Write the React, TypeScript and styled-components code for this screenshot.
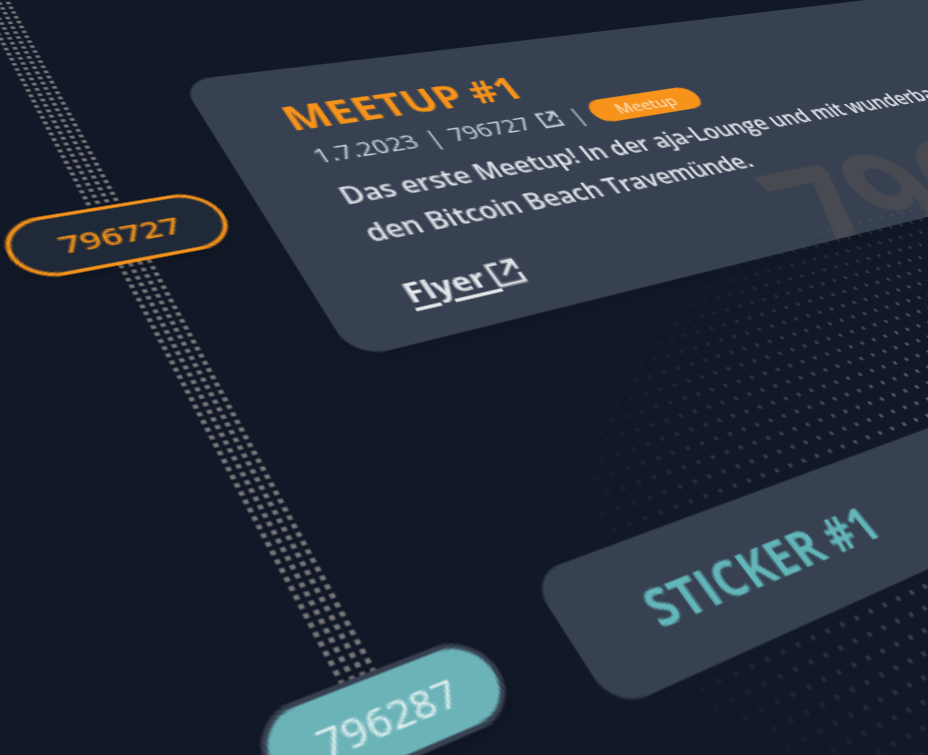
import React from 'react';
import styled, { createGlobalStyle } from 'styled-components';

type P = [number, number];
function solve(m: number[][], b: number[]) {
  const n = b.length; const a = m.map((r, i) => [...r, b[i]]);
  for (let i = 0; i < n; i++) {
    let p = i; for (let r = i + 1; r < n; r++) if (Math.abs(a[r][i]) > Math.abs(a[p][i])) p = r;
    [a[i], a[p]] = [a[p], a[i]];
    for (let r = 0; r < n; r++) if (r !== i) { const f = a[r][i] / a[i][i]; for (let c = i; c <= n; c++) a[r][c] -= f * a[i][c]; }
  }
  return a.map((r, i) => r[n] / r[i]);
}
function homography(src: P[], dst: P[]) {
  const m: number[][] = []; const b: number[] = [];
  src.forEach(([u, v], i) => { const [x, y] = dst[i];
    m.push([u, v, 1, 0, 0, 0, -u * x, -v * x]); b.push(x);
    m.push([0, 0, 0, u, v, 1, -u * y, -v * y]); b.push(y); });
  return solve(m, b);
}
const U0 = 150, V0 = 100, W = 510, H0 = 190;
const h = homography([[U0, V0], [U0, V0 + H0], [U0 + W, V0], [U0 + W, V0 + H0]], [[180, 81], [354, 359], [900, -4], [1101, 174]]);
const matrix = `matrix3d(${h[0]},${h[3]},0,${h[6]},${h[1]},${h[4]},0,${h[7]},0,0,1,0,${h[2]},${h[5]},0,1)`;

const Global = createGlobalStyle`
  html, body { margin: 0; background: #111827; height: 100%; overflow: hidden; }
`;
const Viewport = styled.div`
  width: 928px; height: 755px; overflow: hidden; position: relative; background: #111827;
`;
const Stage = styled.div`
  position: absolute; left: 0; top: 0; width: 1400px; height: 1000px;
  transform-origin: 0 0; transform: ${matrix}; will-change: transform; filter: blur(.35px);
  font-family: "Open Sans", sans-serif; color: #d1d5db;
  display: grid; grid-template-columns: 150px 1fr; grid-template-rows: 190px 60px;
  row-gap: 119px; padding-top: 100px; box-sizing: border-box; align-items: center;
`;
const Rail = styled.div`
  position: absolute; left: 78px; top: 0; width: 16px; height: 440px;
  background-image: radial-gradient(circle at center, #767676 1.2px, transparent 1.5px);
  background-size: 4px 4px;
`;
const Pill = styled.div<{ $tone: 'orange' | 'teal' }>`
  position: relative; box-sizing: border-box;
  margin-left: ${p => (p.$tone === 'orange' ? 40 : 45)}px;
  width: ${p => (p.$tone === 'orange' ? 93 : 88)}px;
  height: ${p => (p.$tone === 'orange' ? 36 : 34)}px;
  border-radius: 999px; display: flex; align-items: center; justify-content: center;
  font-size: 15px;
  font-weight: ${p => (p.$tone === 'orange' ? 600 : 500)};
  background: ${p => (p.$tone === 'orange' ? '#1f2937' : '#6cb3b8')};
  border: 2px solid ${p => (p.$tone === 'orange' ? '#f7931a' : '#374151')};
  color: ${p => (p.$tone === 'orange' ? '#f7931a' : '#e3f1f1')};
  box-shadow: 0 2px 6px rgba(0,0,0,.25);
`;
const Card = styled.article`
  position: relative; overflow: hidden; width: 720px; height: 190px; box-sizing: border-box;
  background: #374151; border-radius: 16px; padding: 22px 0 0 38px;
  box-shadow: 0 4px 10px rgba(0,0,0,.15);
`;
const Title = styled.h2<{ $tone: string; $size: number }>`
  margin: 0; font-size: ${p => p.$size}px; line-height: 32px; font-weight: 700; text-transform: uppercase;
  letter-spacing: .2px; word-spacing: -1px; color: ${p => p.$tone};
`;
const Meta = styled.div`
  display: flex; align-items: center; gap: 6px; height: 24px; margin-left: 2px; font-size: 14px; font-weight: 500; color: #cbd5e1;
`;
const Badge = styled.span`
  width: 75px; height: 19px; border-radius: 999px; background: #f7931a; color: #fde7cc;
  font-size: 11.5px; display: flex; align-items: center; justify-content: center;
`;
const Body = styled.p`
  margin: 5px 0 0 2px; font-size: 15.3px; line-height: 26px; color: #e0e4ea; white-space: nowrap; font-weight: 600;
`;
const Flyer = styled.a`
  display: inline-flex; align-items: center; margin: 13px 0 0 1px; font-size: 16.5px; line-height: 28px;
  font-weight: 700; color: #e5e7eb;
`;
const FlyerLabel = styled.span`
  text-decoration: underline; text-decoration-thickness: 1.5px; text-underline-offset: 3px; white-space: pre;
`;
const Watermark = styled.span`
  position: absolute; left: 264px; top: 120px; font-size: 96px; line-height: 96px; font-weight: 700; color: #474a50;
`;
const StickerRow = styled.div`position: relative; margin-left: 14px; height: 60px;`;
const DotField = styled.div`
  position: absolute; left: -40px; top: -130px; width: 980px; height: 330px;
  background-image: radial-gradient(circle at center, #828282 1px, transparent 1.35px);
  background-size: 8px 8px;
  mask-image: radial-gradient(ellipse 380px 190px at 440px 165px, #000 20%, transparent 100%);
`;
const StickerCard = styled.article`
  position: relative; width: 720px; height: 60px; box-sizing: border-box; background: #374151; border-radius: 14px;
  padding-left: 36px; display: flex; align-items: center;
`;
const Icon = styled.svg<{ $size: number; $shift: number }>`
  width: ${p => p.$size}px; height: ${p => p.$size}px; flex: none; margin-left: ${p => p.$shift}px;
  fill: none; stroke: currentColor; stroke-width: 2.4;
`;
const External = ({ size, shift = 0 }: { size: number; shift?: number }) => (
  <Icon $size={size} $shift={shift} viewBox="0 0 24 24">
    <path d="M10 4H3v17h17v-7" />
    <path d="M10 14 19 5M13 3.5h7.5V11" />
  </Icon>
);

export default function App() {
  return (
    <Viewport>
      <Global />
      <Stage>
        <Rail />
        <Pill $tone="orange">796727</Pill>
        <Card>
          <Title $tone="#f7931a" $size={24.5}>Meetup #1</Title>
          <Meta>
            <span>1.7.2023</span><span>|</span><span>796727</span><External size={15} /><span>|</span>
            <Badge>Meetup</Badge>
          </Meta>
          <Body>
            Das erste Meetup! In der aja-Lounge und mit wunderbarem Ausblick auf<br />den Bitcoin Beach Travemünde.
          </Body>
          <Flyer><FlyerLabel>Flyer </FlyerLabel><External size={19} shift={-2} /></Flyer>
          <Watermark>796727</Watermark>
        </Card>
        <Pill $tone="teal">796287</Pill>
        <StickerRow>
          <DotField />
          <StickerCard><Title $tone="#63b7bb" $size={22}>Sticker #1</Title></StickerCard>
        </StickerRow>
      </Stage>
    </Viewport>
  );
}
